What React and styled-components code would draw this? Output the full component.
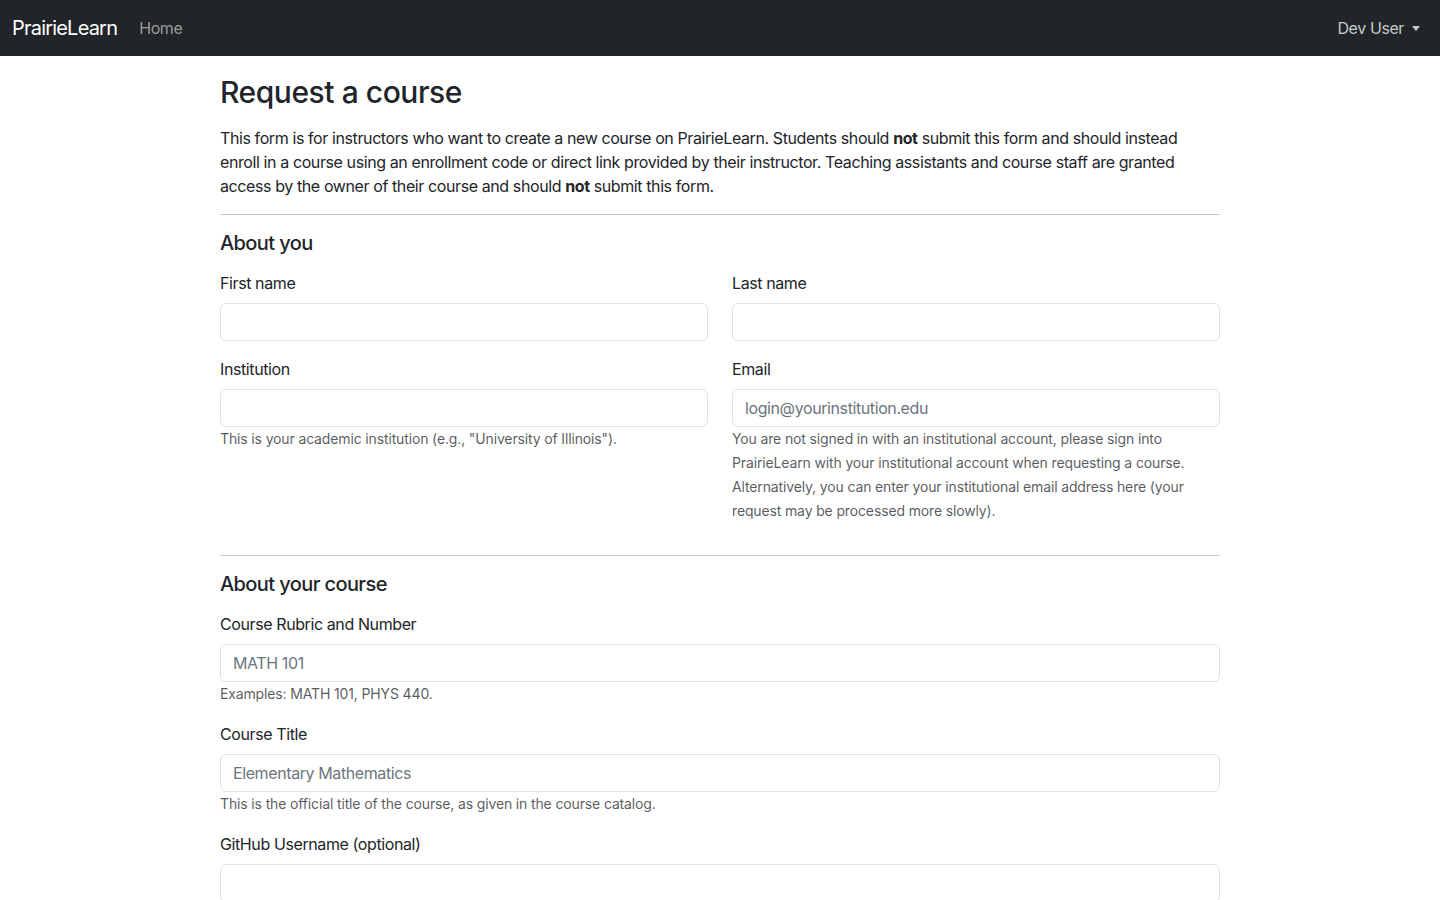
import React from 'react';
import styled, { createGlobalStyle } from 'styled-components';

const GlobalStyle = createGlobalStyle`
  * { box-sizing: border-box; }
  body {
    margin: 0;
    font-family: Inter, 'Liberation Sans', sans-serif;
    font-size: 16px;
    line-height: 1.5;
    letter-spacing: -0.025em;
    color: #212529;
    background: #fff;
  }
`;

const Navbar = styled.nav`
  height: 56px;
  background: #212529;
  display: flex;
  align-items: center;
  justify-content: space-between;
  padding: 0 12px;
`;

const NavLeft = styled.div`
  display: flex;
  align-items: center;
`;

const Brand = styled.a`
  font-size: 20px;
  line-height: 30px;
  color: #fff;
  margin-right: 14px;
  text-decoration: none;
  letter-spacing: -0.04em;
`;

const NavLink = styled.a`
  padding: 8px;
  color: ${(p) => (p.$muted ? 'rgba(255,255,255,0.55)' : 'rgba(255,255,255,0.75)')};
  text-decoration: none;
  display: flex;
  align-items: center;
  gap: 8px;
`;

const Caret = styled.span`
  display: inline-block;
  border-top: 5px solid currentColor;
  border-left: 4px solid transparent;
  border-right: 4px solid transparent;
  margin-top: 1px;
`;

const Main = styled.main`
  max-width: 1000px;
  margin: 0 auto;
  padding-top: 17px;
`;

const Title = styled.h1`
  font-size: 30px;
  font-weight: 500;
  line-height: 38px;
  letter-spacing: -0.015em;
  margin: 0 0 15px;
`;

const Intro = styled.p`
  margin: 0 0 16px;
`;

const Rule = styled.hr`
  border: 0;
  border-top: 1px solid #212529;
  opacity: 0.25;
  margin: 16px 0;
`;

const SectionTitle = styled.h2`
  font-size: 20px;
  font-weight: 500;
  line-height: 24px;
  letter-spacing: -0.03em;
  margin: 0 0 16px;
`;

const Row = styled.div`
  display: grid;
  grid-template-columns: 1fr 1fr;
  column-gap: 24px;
`;

const Group = styled.div`
  margin-bottom: 16px;
`;

const Label = styled.label`
  display: block;
  margin-bottom: 8px;
`;

const Input = styled.input`
  display: block;
  width: 100%;
  height: 38px;
  padding: 6px 12px;
  font: inherit;
  letter-spacing: inherit;
  color: #212529;
  border: 1px solid #dee2e6;
  border-radius: 6px;
  background: #fff;
  &::placeholder {
    color: #6c757d;
  }
`;

const Help = styled.div`
  font-size: 14px;
  line-height: 24px;
  letter-spacing: -0.01em;
  color: rgba(33, 37, 41, 0.75);
`;

const Field = ({ label, placeholder, help }) => (
  <Group>
    <Label>{label}</Label>
    <Input type="text" placeholder={placeholder} />
    {help && <Help>{help}</Help>}
  </Group>
);

export default function App() {
  return (
    <>
      <GlobalStyle />
      <Navbar>
        <NavLeft>
          <Brand href="#">PrairieLearn</Brand>
          <NavLink href="#" $muted>Home</NavLink>
        </NavLeft>
        <NavLink href="#">
          Dev User <Caret />
        </NavLink>
      </Navbar>
      <Main>
        <Title>Request a course</Title>
        <Intro>
          This form is for instructors who want to create a new course on PrairieLearn. Students should{' '}
          <strong>not</strong> submit this form and should instead enroll in a course using an enrollment
          code or direct link provided by their instructor. Teaching assistants and course staff are granted
          access by the owner of their course and should <strong>not</strong> submit this form.
        </Intro>
        <Rule />
        <SectionTitle>About you</SectionTitle>
        <Row>
          <Field label="First name" />
          <Field label="Last name" />
          <Field
            label="Institution"
            help='This is your academic institution (e.g., "University of Illinois").'
          />
          <Field
            label="Email"
            placeholder="login@yourinstitution.edu"
            help="You are not signed in with an institutional account, please sign into PrairieLearn with your institutional account when requesting a course. Alternatively, you can enter your institutional email address here (your request may be processed more slowly)."
          />
        </Row>
        <Rule />
        <SectionTitle>About your course</SectionTitle>
        <Field label="Course Rubric and Number" placeholder="MATH 101" help="Examples: MATH 101, PHYS 440." />
        <Field
          label="Course Title"
          placeholder="Elementary Mathematics"
          help="This is the official title of the course, as given in the course catalog."
        />
        <Field label="GitHub Username (optional)" />
      </Main>
    </>
  );
}
